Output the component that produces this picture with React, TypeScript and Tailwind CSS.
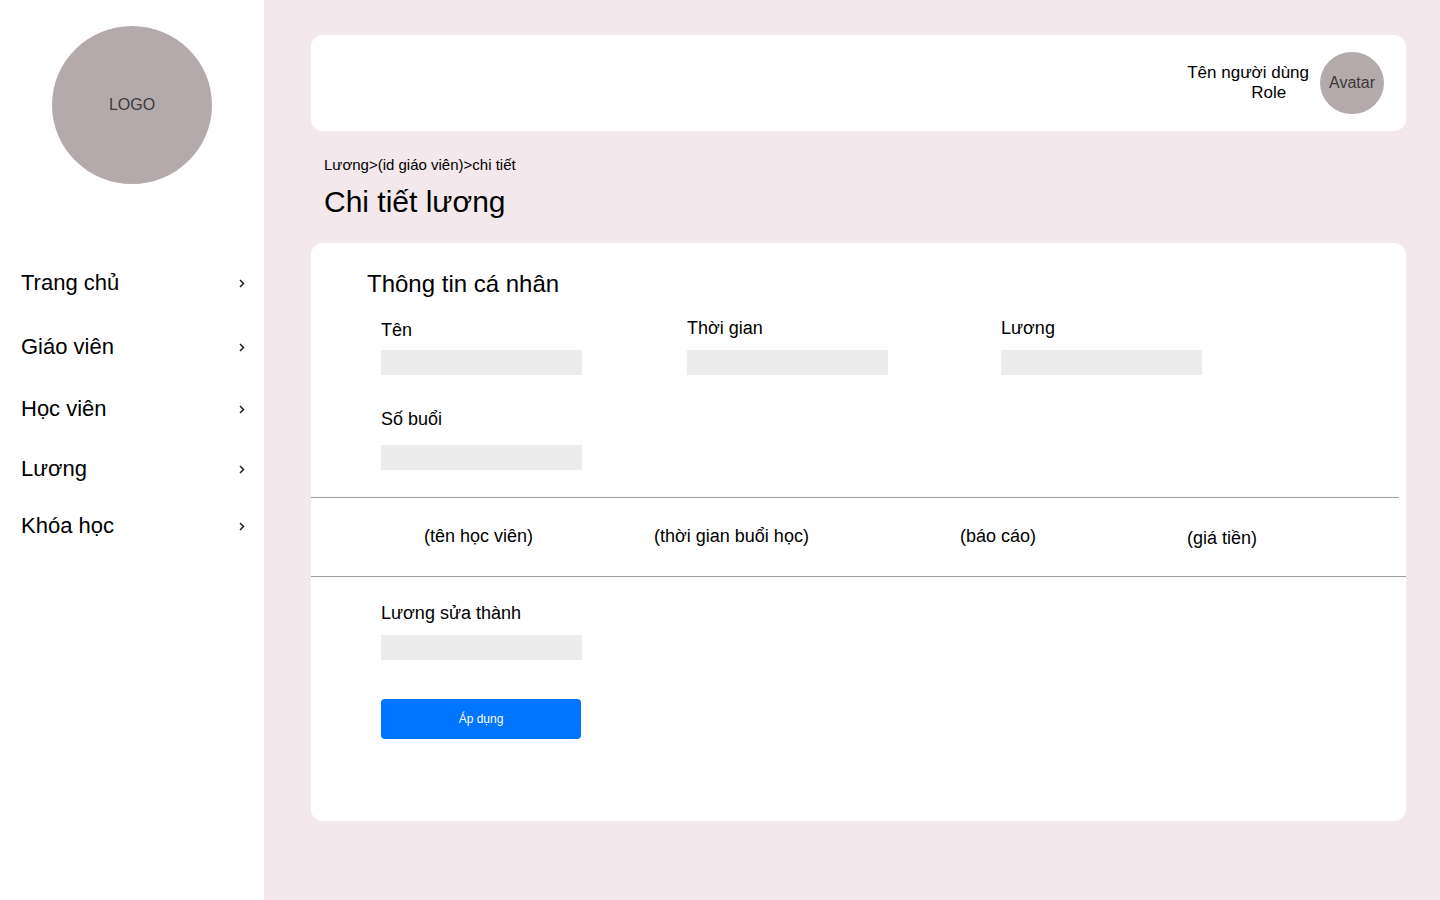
import { useId } from "react";

const navItems = [
  { label: "Trang chủ", spacing: "" },
  { label: "Giáo viên", spacing: "mt-9" },
  { label: "Học viên", spacing: "mt-[34px]" },
  { label: "Lương", spacing: "mt-8" },
  { label: "Khóa học", spacing: "mt-[29px]" },
];

function Chevron() {
  return (
    <svg
      className="h-[10px] w-[6px]"
      viewBox="0 0 6 10"
      fill="none"
      stroke="#222"
      strokeWidth="1.5"
      aria-hidden="true"
    >
      <path d="M1 2 L4.5 5.5 L1 9" />
    </svg>
  );
}

function Field({ label, gap = "gap-2.5" }: { label: string; gap?: string }) {
  const id = useId();
  return (
    <div className={`flex flex-col items-start justify-end ${gap}`}>
      <label htmlFor={id} className="text-lg leading-6">
        {label}
      </label>
      <input id={id} type="text" className="h-[25px] w-[201px] bg-[#ececec] px-2 text-sm outline-none" />
    </div>
  );
}

function Sidebar() {
  return (
    <aside className="w-[264px] shrink-0 bg-white pt-[26px]">
      <div className="mx-auto flex h-[158px] w-40 items-center justify-center rounded-[50%] bg-[#b4aaab] text-base text-[#3b3b3b]">
        LOGO
      </div>
      <nav className="mt-[85px] pr-[19px] pl-[21px]">
        <ul>
          {navItems.map((item) => (
            <li key={item.label} className={item.spacing}>
              <a href="#" className="flex h-7 items-center justify-between text-[22px] leading-7">
                {item.label}
                <Chevron />
              </a>
            </li>
          ))}
        </ul>
      </nav>
    </aside>
  );
}

export default function App() {
  return (
    <div className="flex min-h-screen bg-[#f3e9ec] font-['Liberation_Sans',Arial,sans-serif] text-black">
      <Sidebar />
      <main className="min-w-0 flex-1 pt-[35px] pr-[34px] pb-10 pl-[47px]">
        <header className="flex h-24 items-center justify-end gap-[11px] rounded-xl bg-white pr-[22px]">
          <div className="text-[17px] leading-5">
            <p>Tên người dùng</p>
            <p className="pl-16">Role</p>
          </div>
          <div className="flex h-[62px] w-16 items-center justify-center rounded-[50%] bg-[#b4aaab] text-base text-[#3b3b3b]">
            Avatar
          </div>
        </header>

        <div className="pt-6 pl-[13px]">
          <nav aria-label="Breadcrumb" className="text-[15px] leading-5">
            <a href="#">Lương</a>&gt;<a href="#">(id giáo viên)</a>&gt;<span>chi tiết</span>
          </nav>
          <h1 className="mt-[9px] text-[30px] leading-9">Chi tiết lương</h1>
        </div>

        <section className="mt-[23px] rounded-xl bg-white pt-[25px] pb-[82px]">
          <h2 className="pl-14 text-2xl leading-8">Thông tin cá nhân</h2>
          <form onSubmit={(event) => event.preventDefault()}>
            <div className="mt-4 grid grid-cols-[306px_314px_201px] gap-y-8 pl-[70px]">
              <Field label="Tên" gap="gap-2" />
              <Field label="Thời gian" />
              <Field label="Lương" />
              <Field label="Số buổi" gap="gap-3.5" />
            </div>

            <hr className="mt-[27px] mr-[7px] border-[#9e9e9e]" />
            <table className="w-full table-fixed border-b border-[#9e9e9e] text-left text-lg leading-6">
              <colgroup>
                <col className="w-[343px]" />
                <col className="w-[306px]" />
                <col className="w-[227px]" />
                <col />
              </colgroup>
              <tbody>
                <tr className="h-[78px] align-middle">
                  <td className="pb-0.5 pl-[113px]">(tên học viên)</td>
                  <td className="pb-0.5">(thời gian buổi học)</td>
                  <td className="pb-0.5">(báo cáo)</td>
                  <td className="pt-0.5">(giá tiền)</td>
                </tr>
              </tbody>
            </table>

            <div className="mt-6 pl-[70px]">
              <Field label="Lương sửa thành" />
              <button
                type="submit"
                className="mt-[39px] h-10 w-[200px] rounded bg-[#0075ff] text-xs text-white"
              >
                Áp dụng
              </button>
            </div>
          </form>
        </section>
      </main>
    </div>
  );
}
